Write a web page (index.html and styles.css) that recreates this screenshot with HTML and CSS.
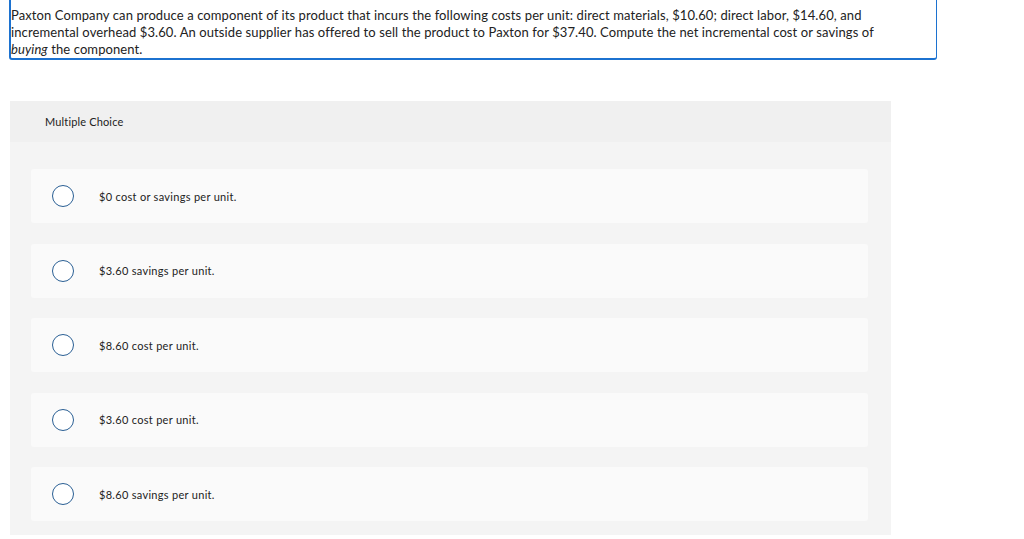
FILE: index.html
```html
<!DOCTYPE html>
<html>
<head>
<meta charset="utf-8">
<link rel="stylesheet" href="styles.css">
</head>
<body>
<div class="question">
  <p>Paxton Company can produce a component of its product that incurs the following costs per unit: direct materials, $10.60; direct labor, $14.60, and incremental overhead $3.60. An outside supplier has offered to sell the product to Paxton for $37.40. Compute the net incremental cost or savings of <em>buying</em> the component.</p>
</div>
<div class="mc">
  <div class="mc-head">Multiple Choice</div>
  <div class="mc-body">
    <div class="opt"><span class="radio"></span><span class="label">$0 cost or savings per unit.</span></div>
    <div class="opt"><span class="radio"></span><span class="label">$3.60 savings per unit.</span></div>
    <div class="opt"><span class="radio"></span><span class="label">$8.60 cost per unit.</span></div>
    <div class="opt"><span class="radio"></span><span class="label">$3.60 cost per unit.</span></div>
    <div class="opt"><span class="radio"></span><span class="label">$8.60 savings per unit.</span></div>
  </div>
</div>
</body>
</html>
```
FILE: styles.css
```css
html, body {
  margin: 0;
  padding: 0;
  background: #fff;
  font-family: Lato, "Open Sans", Arial, sans-serif;
  color: #222;
  overflow: hidden;
}
.question {
  margin: -4px 0 0 9px;
  width: 925px;
  border: 1px solid #1c72d0;
  border-left-width: 2px;
  border-bottom-width: 2px;
  border-radius: 0 0 3px 3px;
  padding: 10px 0 0 0;
}
.question p {
  margin: 0;
  font-size: 13px;
  letter-spacing: 0.1px;
  line-height: 17px;
  color: #222;
  padding: 0 40px 0 0;
}
.question em {
  font-style: italic;
}
.mc {
  margin: 41px 0 0 10px;
  width: 881px;
  background: #f4f4f4;
}
.mc-head {
  background: #f0f0f0;
  height: 41px;
  display: flex;
  align-items: center;
  padding-left: 35px;
  font-size: 11px;
  letter-spacing: 0.15px;
  color: #222;
}
.mc-body {
  padding: 27px 23px 14px 21px;
  display: flex;
  flex-direction: column;
  gap: 20.5px;
}
.opt {
  height: 54px;
  background: #fafafa;
  border-radius: 3px;
  display: flex;
  align-items: center;
}
.radio {
  width: 20px;
  height: 20px;
  border: 1.5px solid #2a5f94;
  border-radius: 50%;
  margin-left: 21px;
  flex: none;
  background: #fff;
}
.label {
  margin-left: 25px;
  font-size: 11px;
  letter-spacing: 0.3px;
  color: #222;
}
```
